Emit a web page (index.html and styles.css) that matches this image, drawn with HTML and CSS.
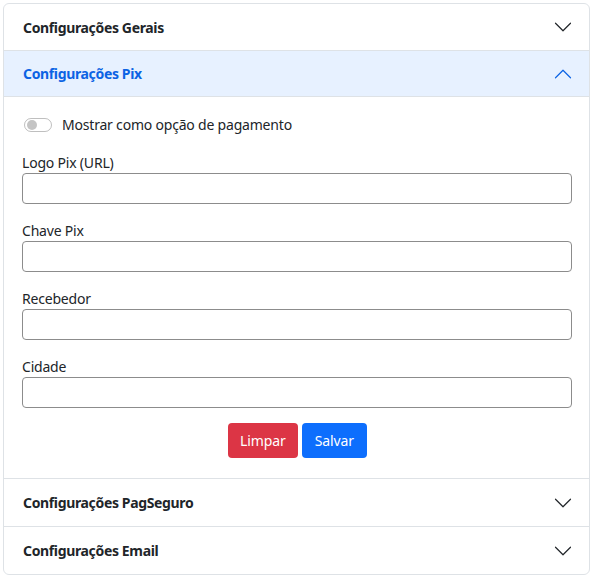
FILE: index.html
```html
<!DOCTYPE html>
<html lang="pt-BR">
<head>
<meta charset="utf-8">
<link rel="stylesheet" href="styles.css">
</head>
<body>
<div class="accordion">
  <div class="acc-item">
    <div class="acc-header">
      <span class="acc-title">Configurações Gerais</span>
      <svg class="chev" viewBox="0 0 16 16" fill="none" stroke="#212529" stroke-linecap="round" stroke-linejoin="round"><path d="M2 5L8 11L14 5"/></svg>
    </div>
  </div>
  <div class="acc-item">
    <div class="acc-header active">
      <span class="acc-title">Configurações Pix</span>
      <svg class="chev" viewBox="0 0 16 16" fill="none" stroke="#0c63e4" stroke-linecap="round" stroke-linejoin="round"><path d="M2 11L8 5L14 11"/></svg>
    </div>
    <div class="acc-body">
      <div class="switch-row">
        <span class="switch"><span class="knob"></span></span>
        <span class="switch-label">Mostrar como opção de pagamento</span>
      </div>
      <div class="field">
        <label class="field-label">Logo Pix (URL)</label>
        <input class="input" type="text">
      </div>
      <div class="field">
        <label class="field-label">Chave Pix</label>
        <input class="input" type="text">
      </div>
      <div class="field">
        <label class="field-label">Recebedor</label>
        <input class="input" type="text">
      </div>
      <div class="field last">
        <label class="field-label">Cidade</label>
        <input class="input" type="text">
      </div>
      <div class="actions">
        <button class="btn btn-danger">Limpar</button>
        <button class="btn btn-primary">Salvar</button>
      </div>
    </div>
  </div>
  <div class="acc-item">
    <div class="acc-header tall">
      <span class="acc-title">Configurações PagSeguro</span>
      <svg class="chev" viewBox="0 0 16 16" fill="none" stroke="#212529" stroke-linecap="round" stroke-linejoin="round"><path d="M2 5L8 11L14 5"/></svg>
    </div>
  </div>
  <div class="acc-item">
    <div class="acc-header tall">
      <span class="acc-title">Configurações Email</span>
      <svg class="chev" viewBox="0 0 16 16" fill="none" stroke="#212529" stroke-linecap="round" stroke-linejoin="round"><path d="M2 5L8 11L14 5"/></svg>
    </div>
  </div>
</div>
</body>
</html>
```
FILE: styles.css
```css
* { box-sizing: border-box; }
html, body { background: #fff; }
body {
  margin: 3px;
  font-family: "Noto Sans", "Open Sans", sans-serif;
  font-size: 14px;
  line-height: 21px;
  color: #212529;
  letter-spacing: -0.2px;
}
.accordion {
  width: 587px;
  border: 1px solid #dee2e6;
  border-radius: 6px;
  overflow: hidden;
}
.acc-item + .acc-item { border-top: 1px solid #dee2e6; }
.acc-header {
  height: 46px;
  display: flex;
  align-items: center;
  justify-content: space-between;
  padding: 0 16px 0 19px;
  font-weight: 700;
  font-size: 14px;
  letter-spacing: -0.35px;
}
.acc-header.tall { height: 47px; }
.acc-header.active {
  background: #e7f1ff;
  color: #0c63e4;
  border-bottom: 1px solid #dee2e6;
}
.chev { width: 20px; height: 20px; stroke-width: 0.95; }
.acc-body { padding: 17px 17px 20px 18px; }
.switch-row {
  display: flex;
  align-items: center;
  gap: 10px;
  padding-left: 2px;
  margin-bottom: 17px;
  height: 21px;
}
.switch {
  width: 28px;
  height: 14px;
  border: 1px solid rgba(0,0,0,.25);
  border-radius: 7px;
  display: flex;
  align-items: center;
  padding-left: 2px;
}
.knob {
  width: 10px;
  height: 10px;
  border-radius: 50%;
  background: #c4c4c4;
}
.field { display: flex; flex-direction: column; margin-bottom: 16px; }
.field.last { margin-bottom: 15px; }
.field-label { line-height: 21px; }
.input {
  height: 31px;
  width: 100%;
  border: 1px solid #8c8c8c;
  border-radius: 4px;
  background: #fff;
  font: inherit;
}
.actions { display: flex; justify-content: center; gap: 4px; }
.btn {
  height: 35px;
  padding: 0 12.5px;
  border: none;
  border-radius: 4px;
  color: #fff;
  font-family: inherit;
  font-size: 14px;
  letter-spacing: -0.1px;
}
.btn-danger { background: #dc3545; }
.btn-primary { background: #0d6efd; }
```
